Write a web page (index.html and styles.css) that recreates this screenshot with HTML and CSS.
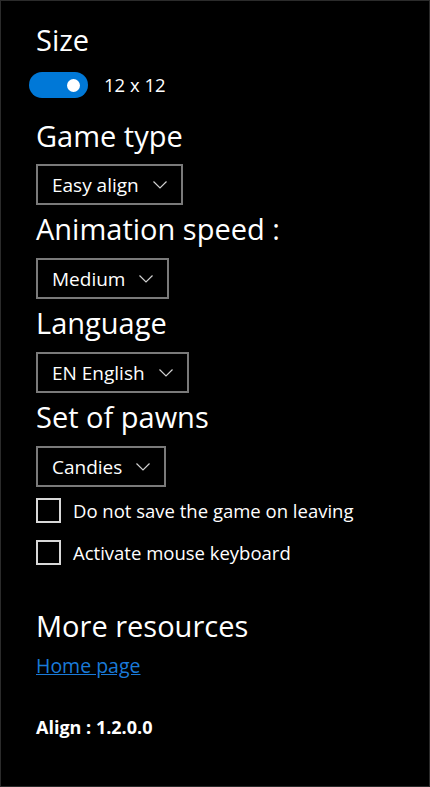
FILE: index.html
```html
<!DOCTYPE html>
<html lang="en">
<head>
<meta charset="utf-8">
<title>Settings</title>
<link rel="stylesheet" href="styles.css">
</head>
<body>
<div class="panel">
  <div class="heading first">Size</div>
  <div class="toggle-row">
    <span class="toggle"><span class="knob"></span></span>
    <span class="toggle-label">12 x 12</span>
  </div>

  <div class="heading gt">Game type</div>
  <div class="combo c1"><span class="combo-text">Easy align</span><svg class="chev" viewBox="0 0 14 8" width="14" height="8"><path d="M0.5 0.5 L7 7 L13.5 0.5" fill="none" stroke="#d0d0d0" stroke-width="1.2"/></svg></div>

  <div class="heading">Animation speed :</div>
  <div class="combo"><span class="combo-text">Medium</span><svg class="chev" viewBox="0 0 14 8" width="14" height="8"><path d="M0.5 0.5 L7 7 L13.5 0.5" fill="none" stroke="#d0d0d0" stroke-width="1.2"/></svg></div>

  <div class="heading">Language</div>
  <div class="combo"><span class="combo-text">EN English</span><svg class="chev" viewBox="0 0 14 8" width="14" height="8"><path d="M0.5 0.5 L7 7 L13.5 0.5" fill="none" stroke="#d0d0d0" stroke-width="1.2"/></svg></div>

  <div class="heading">Set of pawns</div>
  <div class="combo"><span class="combo-text">Candies</span><svg class="chev" viewBox="0 0 14 8" width="14" height="8"><path d="M0.5 0.5 L7 7 L13.5 0.5" fill="none" stroke="#d0d0d0" stroke-width="1.2"/></svg></div>

  <div class="check-row cr1"><span class="box"></span><span class="check-label">Do not save the game on leaving</span></div>
  <div class="check-row cr2"><span class="box"></span><span class="check-label">Activate mouse keyboard</span></div>

  <div class="heading more">More resources</div>
  <a class="link" href="#">Home page</a>
  <div class="version">Align : 1.2.0.0</div>
</div>
</body>
</html>
```

FILE: styles.css
```css
html, body {
  margin: 0;
  padding: 0;
}
body {
  width: 430px;
  height: 787px;
  box-sizing: border-box;
  background: #000;
  border: 1px solid #2b2b2b;
  color: #fff;
  font-family: "Open Sans", "Noto Sans", sans-serif;
  overflow: hidden;
}
.panel {
  padding: 21px 0 0 35px;
  display: flex;
  flex-direction: column;
  align-items: flex-start;
}
.heading {
  font-size: 29px;
  line-height: 36px;
  height: 36px;
  margin-top: 6px;
  white-space: nowrap;
}
.heading.first { margin-top: 0; }
.heading.gt { margin-top: 20px; }
.heading.more { margin-top: 43px; }

.toggle-row {
  display: flex;
  align-items: center;
  margin-top: 14px;
  margin-left: -7px;
  height: 26px;
}
.toggle {
  width: 59px;
  height: 26px;
  border-radius: 13px;
  background: #0078d7;
  position: relative;
  display: block;
}
.knob {
  position: absolute;
  width: 13px;
  height: 13px;
  border-radius: 50%;
  background: #fff;
  right: 8px;
  top: 6.5px;
}
.toggle-label {
  margin-left: 16px;
  font-size: 18.5px;
  line-height: 26px;
}

.combo {
  margin-top: 11px;
  height: 41px;
  box-sizing: border-box;
  border: 2px solid #7a7a7a;
  display: flex;
  align-items: center;
  padding: 0 14px 0 14px;
}
.combo.c1 { margin-top: 10px; }
.combo-text {
  font-size: 19px;
  line-height: 24px;
  white-space: nowrap;
}
.chev {
  margin-left: 14px;
  display: block;
}

.check-row {
  display: flex;
  align-items: center;
  height: 25px;
}
.cr1 { margin-top: 11px; }
.cr2 { margin-top: 17px; }
.box {
  width: 25px;
  height: 25px;
  box-sizing: border-box;
  border: 2px solid #d8d8d8;
  display: block;
}
.check-label {
  margin-left: 12px;
  font-size: 18.5px;
  line-height: 24px;
  white-space: nowrap;
}

.link {
  margin-top: 9px;
  font-size: 19.5px;
  line-height: 26px;
  color: #1a7ad8;
  text-decoration: underline;
}
.version {
  margin-top: 37px;
  font-size: 18px;
  line-height: 22px;
  font-weight: bold;
}
```
